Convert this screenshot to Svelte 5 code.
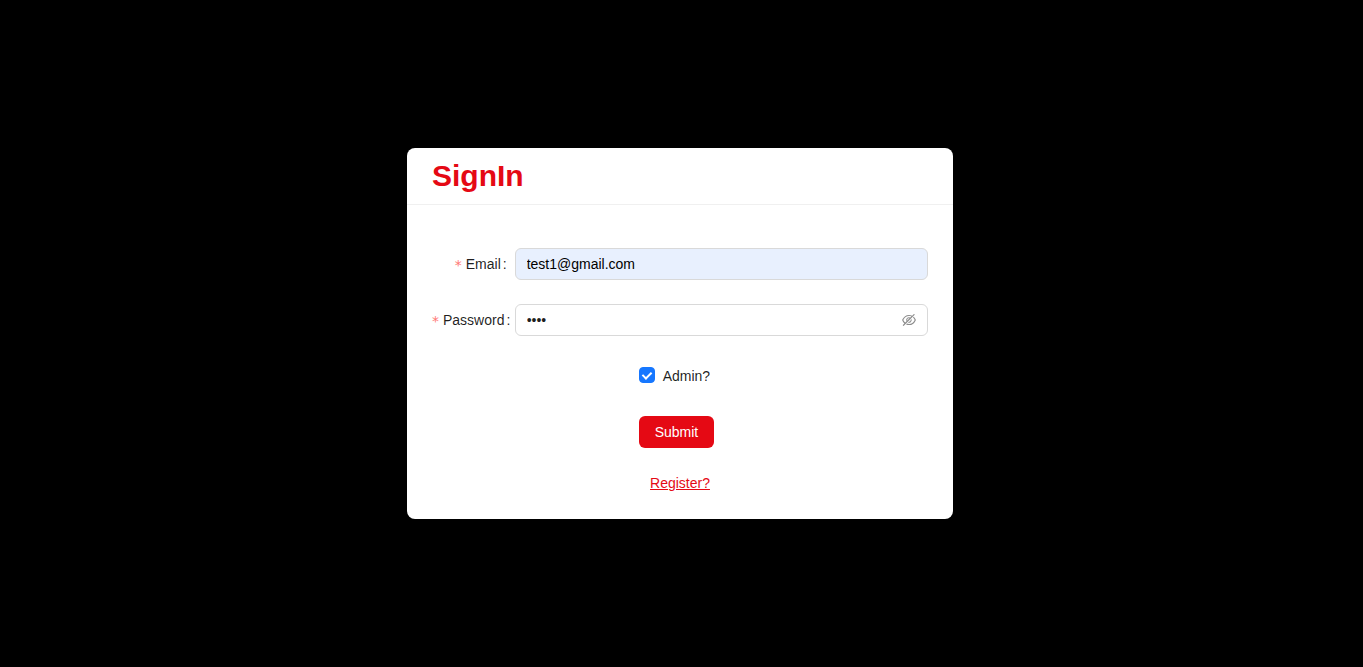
<script>
  let email = $state('test1@gmail.com');
  let password = $state('test');
  let visible = $state(false);
  let admin = $state(true);
</script>

<main>
  <section class="card">
    <header><h1>SignIn</h1></header>
    <form onsubmit={(e) => e.preventDefault()}>
      <div class="row">
        <label class="name" for="email">Email</label>
        <div class="field filled">
          <input id="email" type="text" bind:value={email} required />
        </div>
      </div>
      <div class="row">
        <label class="name" for="password">Password</label>
        <div class="field">
          <input id="password" type={visible ? 'text' : 'password'} value={password} oninput={(e) => (password = e.currentTarget.value)} required />
          <button class="eye" type="button" aria-label="Toggle password visibility" onclick={() => (visible = !visible)}>
            <svg viewBox="64 64 896 896" width="14" height="14" fill="currentColor" aria-hidden="true">
              <path d="M942.2 486.2Q889.47 375.11 816.7 305l-50.88 50.88C807.31 395.53 843.45 447.4 874.7 512 791.5 684.2 673.4 766 512 766q-72.67 0-133.87-22.38L323 798.75Q408 838 512 838q288.3 0 430.2-300.3a60.29 60.29 0 000-51.5zm-63.57-320.64L836 122.88a8 8 0 00-11.32 0L715.31 232.2Q624.86 186 512 186q-288.3 0-430.2 300.3a60.3 60.3 0 000 51.5q56.69 119.4 136.5 191.41L112.48 835a8 8 0 000 11.31L155.17 889a8 8 0 0011.31 0l712.15-712.12a8 8 0 000-11.32zM149.3 512C232.6 339.8 350.7 258 512 258c54.54 0 104.13 9.36 149.12 28.39l-70.3 70.3a176 176 0 00-238.13 238.13l-83.42 83.42C223.1 637.49 183.3 582.28 149.3 512zm246.7 0a112.11 112.11 0 01146.2-106.69L401.31 546.2A112 112 0 01396 512z" />
              <path d="M508 624c-3.46 0-6.87-.16-10.25-.47l-52.82 52.82a176.09 176.09 0 00227.42-227.42l-52.82 52.82c.31 3.38.47 6.79.47 10.25a111.94 111.94 0 01-112 112z" />
            </svg>
          </button>
        </div>
      </div>
      <div class="offset">
        <label class="admin"><input type="checkbox" bind:checked={admin} /><span>Admin?</span></label>
      </div>
      <div class="offset"><button class="submit" type="submit">Submit</button></div>
    </form>
    <a href="#register">Register?</a>
  </section>
</main>

<style>
  :global(body) {
    margin: 0;
    background: #000;
  }
  main {
    display: flex;
    align-items: center;
    justify-content: center;
    min-height: 100vh;
    box-sizing: border-box;
    padding-right: 3px;
    font: 14px/22px "Liberation Sans", Arial, sans-serif;
    color: rgba(0, 0, 0, 0.88);
  }
  .card {
    box-sizing: border-box;
    width: 100%;
    max-width: 546px;
    background: #fff;
    border-radius: 8px;
    display: flex;
    flex-direction: column;
    padding-bottom: 25px;
  }
  header {
    box-sizing: border-box;
    min-height: 57px;
    display: flex;
    align-items: center;
    padding: 0 25px;
    border-bottom: 1px solid #f0f0f0;
  }
  h1 {
    margin: 0;
    font-size: 30px;
    line-height: 38px;
    color: #e50914;
  }
  form {
    padding: 43px 25px 24px;
    display: grid;
    gap: 24px;
  }
  .row {
    display: grid;
    grid-template-columns: minmax(0, 1fr) minmax(0, 5fr);
    align-items: center;
  }
  .name {
    display: flex;
    align-items: center;
    justify-content: safe flex-end;
    white-space: nowrap;
  }
  .name::before {
    content: "*";
    padding-top: 2px;
    margin-right: 4px;
    color: #ff7875;
    font-family: "DejaVu Sans", sans-serif;
    line-height: 14px;
  }
  .name::after {
    content: ":";
    margin: 0 8px 0 2px;
  }
  .field {
    box-sizing: border-box;
    height: 32px;
    display: flex;
    align-items: center;
    padding: 0 11px;
    border: 1px solid #d9d9d9;
    border-radius: 6px;
    background: #fff;
  }
  .filled {
    background: #e8f0fe;
  }
  .field input {
    flex: 1;
    min-width: 0;
    padding: 0;
    border: 0;
    outline: 0;
    background: transparent;
    font: inherit;
    color: inherit;
  }
  .filled input {
    color: #000;
  }
  .eye {
    display: flex;
    padding: 0;
    border: 0;
    background: none;
    color: rgba(0, 0, 0, 0.45);
    cursor: pointer;
  }
  .offset {
    display: flex;
    align-items: center;
    min-height: 32px;
    padding-left: calc(100% * 5 / 12);
  }
  .admin {
    display: flex;
    align-items: flex-start;
    gap: 8px;
  }
  .admin input {
    appearance: none;
    display: grid;
    place-items: start center;
    width: 16px;
    height: 16px;
    box-sizing: border-box;
    margin: 2px 0 0;
    border: 1px solid #d9d9d9;
    border-radius: 4px;
  }
  .admin input:checked {
    background: #1677ff;
    border-color: #1677ff;
  }
  .admin input:checked::after {
    content: "";
    box-sizing: border-box;
    width: 6px;
    height: 9px;
    margin-top: 2px;
    border: solid #fff;
    border-width: 0 2px 2px 0;
    transform: rotate(45deg);
  }
  .submit {
    height: 32px;
    padding: 0 16px;
    border: 0;
    border-radius: 6px;
    background: #e50914;
    color: #fff;
    font: inherit;
    cursor: pointer;
  }
  a {
    align-self: center;
    color: #e50914;
    text-decoration: underline;
  }
</style>
